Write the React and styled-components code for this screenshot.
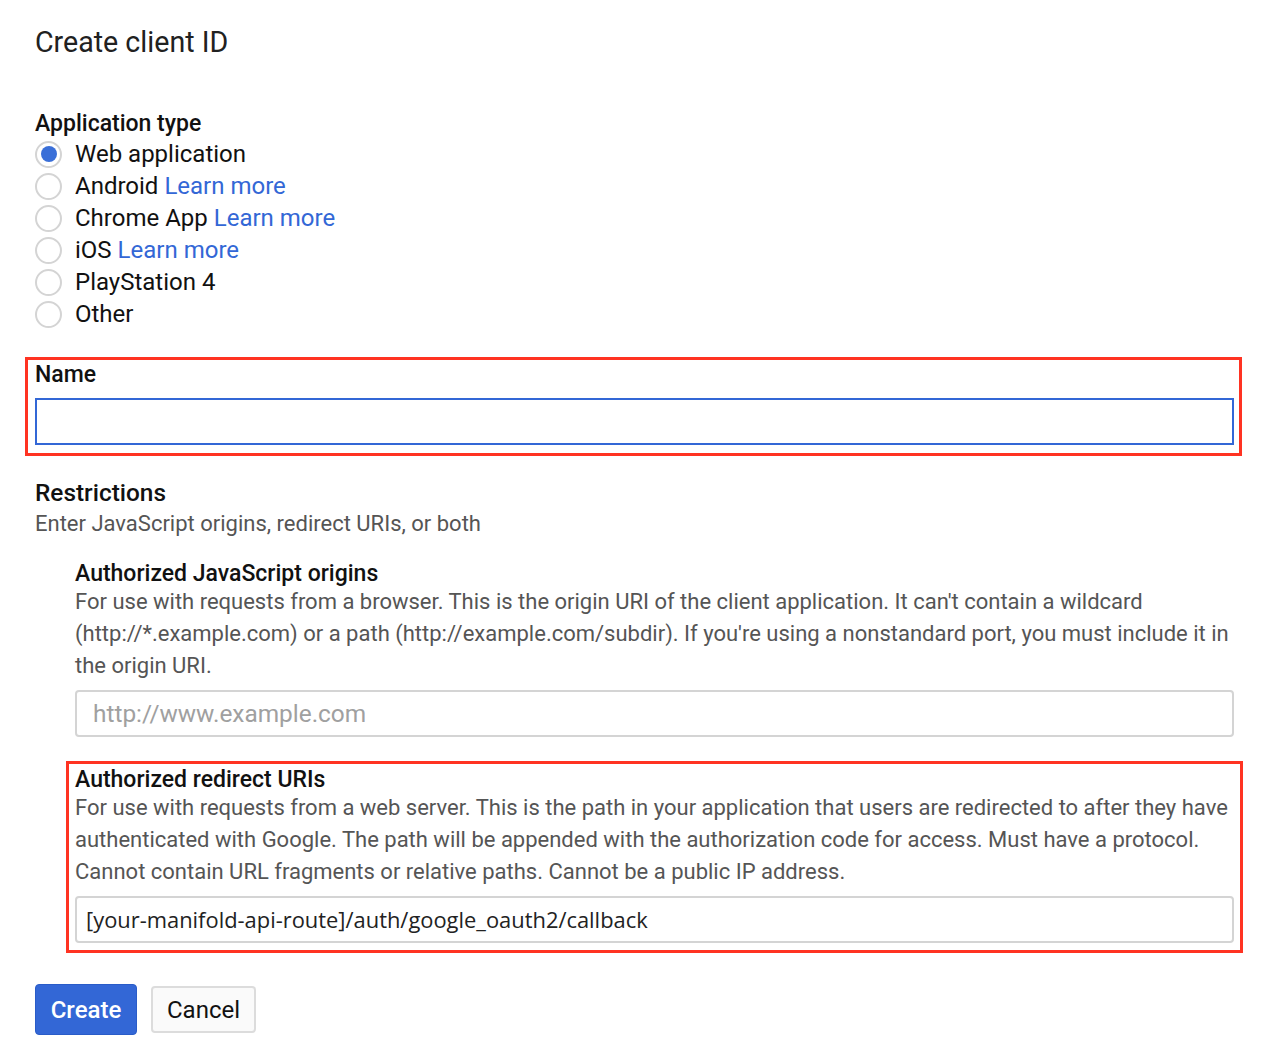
import React from "react"
import styled, { createGlobalStyle } from "styled-components"

const GlobalStyle = createGlobalStyle`
  body {
    margin: 0;
    background: #fff;
    font-family: Roboto, "Liberation Sans", Arial, sans-serif;
    color: #212121;
  }
`

const Page = styled.div`
  width: 1199px;
  padding: 24px 35px 20px;
`
const Title = styled.h1`
  font-size: 28.6px;
  font-weight: 400;
  line-height: 36px;
  margin: 0 0 50px;
  color: #212121;
`
const FieldLabel = styled.div`
  font-size: ${(p) => p.$size || 23}px;
  font-weight: 500;
  line-height: ${(p) => p.$lh || 28}px;
  color: #111;
`
const RadioList = styled.div`
  display: flex;
  flex-direction: column;
`
const RadioRow = styled.label`
  display: flex;
  align-items: center;
  height: 32px;
  font-size: 24px;
  color: #111;
`
const RadioCircle = styled.span`
  box-sizing: border-box;
  width: 27px;
  height: 27px;
  border-radius: 50%;
  border: 2px solid #d4d4d4;
  margin-right: 13px;
  display: flex;
  align-items: center;
  justify-content: center;
  &::after {
    content: "";
    display: ${(p) => (p.$checked ? "block" : "none")};
    width: 16px;
    height: 16px;
    border-radius: 50%;
    background: #3a6fd8;
  }
`
const LearnMore = styled.a`
  color: #3367d6;
  text-decoration: none;
  margin-left: 6px;
`
const Highlight = styled.div`
  border: 3px solid #ff3322;
  margin: ${(p) => p.$margin};
  padding: ${(p) => p.$padding};
`
const NameInput = styled.div`
  box-sizing: border-box;
  height: 47px;
  margin-top: 9px;
  border: 2px solid #3367d6;
`
const Section = styled.div`
  margin-top: 21px;
`
const Subtitle = styled.div`
  font-size: 22px;
  line-height: 32px;
  color: #555;
`
const Indented = styled.div`
  padding-left: 40px;
  margin-top: 22px;
`
const Description = styled.div`
  font-size: 22px;
  line-height: 32px;
  color: #555;
`
const TextInput = styled.div`
  box-sizing: border-box;
  height: 47px;
  margin-top: 8px;
  border: 2px solid #d4d4d4;
  border-radius: 4px;
  display: flex;
  align-items: center;
  padding-left: ${(p) => (p.$filled ? 9 : 16)}px;
  font-size: ${(p) => (p.$filled ? 21.9 : 24.4)}px;
  font-family: ${(p) =>
    p.$filled ? '"Open Sans", "Liberation Sans", sans-serif' : "inherit"};
  color: ${(p) => (p.$filled ? "#222" : "#a0a0a0")};
  white-space: nowrap;
`
const Actions = styled.div`
  display: flex;
  align-items: center;
  gap: 14px;
  margin-top: 31px;
`
const Button = styled.button`
  box-sizing: border-box;
  font-family: Roboto, "Liberation Sans", Arial, sans-serif;
  font-size: 24px;
  border-radius: 4px;
  cursor: pointer;
  padding: 0;
`
const PrimaryButton = styled(Button)`
  width: 102px;
  height: 51px;
  background: #3367d6;
  border: 1px solid #2a5cc8;
  color: #fff;
  font-weight: 500;
`
const SecondaryButton = styled(Button)`
  width: 105px;
  height: 47px;
  background: #fafafa;
  border: 2px solid #dcdcdc;
  color: #111;
  font-weight: 400;
`

const appTypes = [
  { label: "Web application", checked: true },
  { label: "Android", learn: true },
  { label: "Chrome App", learn: true },
  { label: "iOS", learn: true },
  { label: "PlayStation 4" },
  { label: "Other" },
]

const App = () => {
  return (
    <Page>
      <GlobalStyle />
      <Title>Create client ID</Title>

      <FieldLabel>Application type</FieldLabel>
      <RadioList>
        {appTypes.map((t) => (
          <RadioRow key={t.label}>
            <RadioCircle $checked={t.checked} />
            {t.label}
            {t.learn && <LearnMore href="#">Learn more</LearnMore>}
          </RadioRow>
        ))}
      </RadioList>

      <Highlight $margin="27px -8px 0 -10px" $padding="1px 5px 8px 7px">
        <FieldLabel>Name</FieldLabel>
        <NameInput />
      </Highlight>

      <Section>
        <FieldLabel $lh={31} $size={24.4}>
          Restrictions
        </FieldLabel>
        <Subtitle>Enter JavaScript origins, redirect URIs, or both</Subtitle>
      </Section>

      <Indented>
        <FieldLabel $lh={24}>Authorized JavaScript origins</FieldLabel>
        <Description>
          For use with requests from a browser. This is the origin URI of the
          client application. It can't contain a wildcard (http://*.example.com)
          or a path (http://example.com/subdir). If you're using a nonstandard
          port, you must include it in the origin URI.
        </Description>
        <TextInput>http://www.example.com</TextInput>

        <Highlight $margin="24px -9px 0 -9px" $padding="4px 6px 7px 6px">
          <FieldLabel $lh={24}>Authorized redirect URIs</FieldLabel>
          <Description>
            For use with requests from a web server. This is the path in your
            application that users are redirected to after they have
            authenticated with Google. The path will be appended with the
            authorization code for access. Must have a protocol. Cannot contain
            URL fragments or relative paths. Cannot be a public IP address.
          </Description>
          <TextInput $filled>
            [your-manifold-api-route]/auth/google_oauth2/callback
          </TextInput>
        </Highlight>
      </Indented>

      <Actions>
        <PrimaryButton>Create</PrimaryButton>
        <SecondaryButton>Cancel</SecondaryButton>
      </Actions>
    </Page>
  )
}

export default App
